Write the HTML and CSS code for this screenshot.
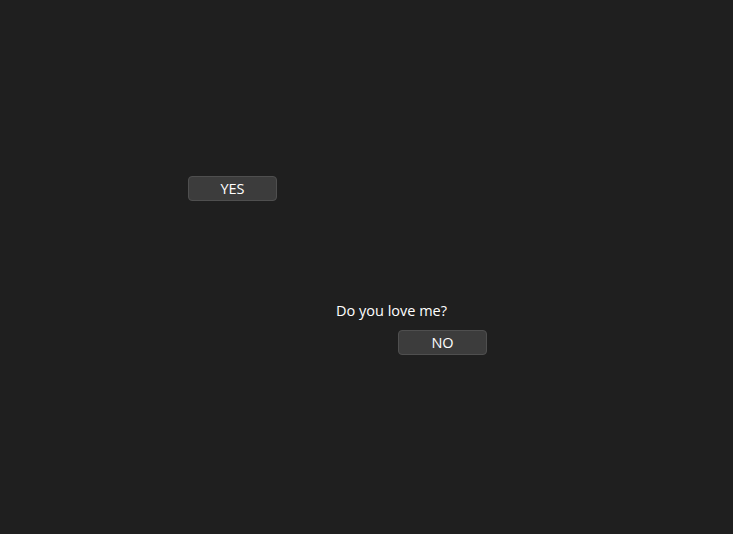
FILE: index.html
```html
<!DOCTYPE html>
<html>
<head>
<meta charset="utf-8">
<link rel="stylesheet" href="styles.css">
</head>
<body>
<div class="stage">
  <button class="btn btn-yes">YES</button>
  <div class="question">Do you love me?</div>
  <button class="btn btn-no">NO</button>
</div>
</body>
</html>
```

FILE: styles.css
```css
html, body {
  margin: 0;
  padding: 0;
  background: #1f1f1f;
  width: 733px;
  height: 534px;
  overflow: hidden;
  font-family: "Open Sans", "Noto Sans", "Liberation Sans", sans-serif;
}
.stage {
  position: relative;
  width: 733px;
  height: 534px;
}
.btn {
  position: absolute;
  box-sizing: border-box;
  width: 89px;
  height: 25px;
  padding: 0;
  background: #3c3c3c;
  border: 1px solid #4f4f4f;
  border-radius: 4px;
  color: #ffffff;
  font-family: inherit;
  font-size: 14.5px;
  line-height: 24px;
  text-align: center;
}
.btn-yes {
  left: 188px;
  top: 176px;
}
.btn-no {
  left: 398px;
  top: 330px;
}
.question {
  position: absolute;
  left: 336px;
  top: 300px;
  color: #ffffff;
  font-size: 14.5px;
  line-height: 21px;
}
```
